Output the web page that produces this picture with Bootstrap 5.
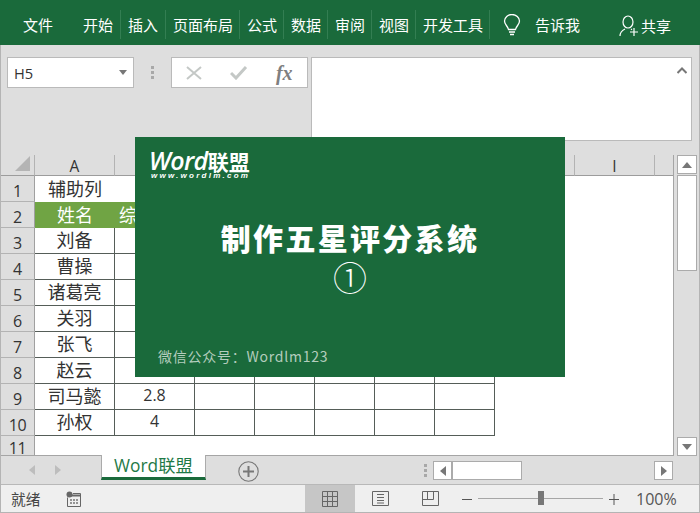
<!DOCTYPE html>
<html lang="zh-CN">
<head>
<meta charset="utf-8">
<title>Word联盟</title>
<link href="https://cdn.jsdelivr.net/npm/bootstrap@5.3.0/dist/css/bootstrap.min.css" rel="stylesheet">
<style>
html,body{height:100%;margin:0;overflow:hidden}
body{font-family:"Noto Sans CJK SC","Liberation Sans",sans-serif;background:#dedede;color:#333}
.app-shell{width:700px;height:513px;position:relative;border:solid #b4b4b4;border-width:0 1px 1px 1px;background:#dedede}
.ribbon{height:45px;background:#1a6a3b;color:#fff;font-size:15px;line-height:1;padding-left:22px;padding-top:4px;margin-right:-1px;margin-left:-1px;white-space:nowrap}
.rib-first{width:54px;padding-left:1px}
.rib-item{padding:0 0 0 7px;height:29px;display:flex;align-items:center;border-right:1px solid #337e52}
.rib-item.w2{width:44px}
.rib-item.w2a{width:45px}
.rib-item.w4{width:74px}
.rib-tell{margin-left:13px;width:32px}
.rib-tell svg{margin-top:1px}
.rib-tell-text{width:84px}
.rib-user{margin-top:3px}
.rib-share{margin-left:2px;margin-top:2px}
.fbar{height:110px;padding:12px 7px 0 6px}
.fbox{background:#fff;border:1px solid #bababa;height:31px}
.namebox{width:127px;font-size:14.67px;font-family:"Open Sans",sans-serif;padding:0 6px 0 6px;color:#333}
.grip{width:37px;padding-top:9px;gap:2px;align-items:center}
.grip i{display:block;width:3px;height:3px;background:#a8a8a8}
.fbtns{width:137px;padding:0 14px 0 14px;color:#8c8c8c}
.fx-lbl{font-family:"Liberation Serif",serif;font-style:italic;font-weight:700;font-size:20px;color:#7f7f7f}
.finput{margin-left:3px;width:382px;height:84px;background:#fff;border:1px solid #bababa;padding:9px 4px 0 0}
.mainrow{height:301px}
.sheet-wrap{width:673px;height:301px;overflow:hidden;background:#fff;border-right:1px solid #a5a5a5;border-bottom:1px solid #a5a5a5;position:relative}
table.sheet{border-collapse:separate;border-spacing:0;table-layout:fixed;width:672px}
table.sheet th,table.sheet td{padding:0;text-align:center;white-space:nowrap}
table.sheet thead th{height:21px;background:#dedede;border-right:1px solid #b3b3b3;border-bottom:1px solid #9c9c9c;font-family:"Open Sans",sans-serif;font-weight:400;font-size:15.5px;line-height:18px;color:#333;padding-top:1px}
table.sheet thead th.hd-last{border-right:0}
table.sheet thead th.hd-corner{padding:0;vertical-align:bottom;border-right:1px solid #b3b3b3}
table.sheet tbody th{height:26px;background:#dedede;font-family:"Open Sans",sans-serif;font-weight:400;font-size:16px;line-height:16px;color:#333;border-right:1px solid #a0a0a0;border-bottom:1px solid #b3b3b3;padding-top:4px;letter-spacing:-.3px}
table.sheet tbody td{height:26px;font-size:18px;line-height:21px;color:#333;padding-bottom:2px}
table.sheet tbody td.num{font-family:"Open Sans",sans-serif;font-size:16px}
table.sheet tbody tr.rw-short th,table.sheet tbody tr.rw-short td{height:20px;border-bottom:0;padding-bottom:0}
tr.rw-fill td{background:#70a444;color:#fff;border-bottom:0}
table.sheet tbody tr.rw-fill td{color:#fff}
tr.rw-grid td{border-right:1px solid #555d58;border-bottom:1px solid #555d58}
tr.rw-grid td.cell-off{border:0}
tr.rw-fill td.cell-off{background:transparent}
.vscroll{width:25px;padding:0 0 0 3px;height:301px}
.sbtn{width:20px;height:19px;background:#fff;border:1px solid #ababab;display:flex;align-items:center;justify-content:center}
.vthumb{width:20px;height:96px;background:#fff;border:1px solid #ababab;margin-top:1px}
.tabbar{height:28px;position:relative}
.tab-nav{width:100px;padding-left:28px;gap:20px;height:28px}
.sheet-tab{width:105px;height:25px;background:#fff;border:1px solid #ababab;border-top:0;border-bottom:3px solid #1a6a3b;color:#1f7a47;font-size:17.33px;line-height:20px;text-align:center;font-family:"Open Sans","Noto Sans CJK SC",sans-serif;margin-top:-1px}
.add-tab{margin-left:32px;margin-top:5px;height:21px}
.tab-grip{margin-left:158px;width:16px;gap:2px;padding-top:8px;align-items:center}
.tab-grip i{display:block;width:3px;height:3px;background:#a8a8a8}
.hsc{margin-top:5px;height:19px;width:240px}
.hsc .sbtn{width:19px}
.hthumb{width:70px;height:19px;background:#fff;border:1px solid #ababab}
.statusbar{height:28px;background:#efefef;border-top:1px solid #b8b8b8;font-size:14.67px;color:#444;margin-bottom:0}
.st-ready{width:65px;padding-left:10px}
.st-macro{width:239px}
.st-view{width:50px;height:27px;display:flex;align-items:center;justify-content:center}
.st-view.active-view{background:#c6c6c6}
.z-minus{margin-left:6px}
.zoomline{width:125px;height:1px;background:#a6a6a6;position:relative;margin:0 5px}
.zoomthumb{position:absolute;left:60px;top:-7px;width:6px;height:14px;background:#777}
.zoompct{font-family:"Open Sans",sans-serif;font-size:16px;color:#555;margin-left:16px}
.z-sign{width:12px;height:12px}
.promo{position:absolute;left:134px;top:137px;width:430px;height:240px;background:#1a6a3b;color:#fff}
.logo-main{position:absolute;left:14px;top:12px;font-size:25px;line-height:22px;font-family:"Open Sans",sans-serif;font-style:italic;font-weight:600;letter-spacing:-.6px;white-space:nowrap}
.logo-cn{font-family:"Noto Sans CJK SC",sans-serif;font-style:normal;font-size:21px;letter-spacing:0}
.logo-url{position:absolute;left:16px;top:34px;font-family:"Liberation Sans",sans-serif;font-style:italic;font-weight:700;font-size:8px;line-height:10px;letter-spacing:2.25px;white-space:nowrap}
.promo-title{position:absolute;left:0;right:0;top:82px;text-align:center;font-weight:900;font-size:30px;line-height:36px;letter-spacing:2.3px}
.promo-num{position:absolute;left:0;right:0;top:120px;text-align:center;font-family:"Noto Sans CJK SC",sans-serif;font-weight:300;font-size:34px;line-height:40px}
.promo-foot{position:absolute;left:23px;top:208px;font-size:14px;line-height:22px;letter-spacing:.75px;color:#b4cdbd;white-space:nowrap}
</style>
</head>
<body>
<div class="app-shell">
  <div class="ribbon d-flex align-items-center">
    <div class="rib-first">文件</div>
    <div class="rib-item w2a">开始</div>
    <div class="rib-item w2a">插入</div>
    <div class="rib-item w4">页面布局</div>
    <div class="rib-item w2">公式</div>
    <div class="rib-item w2">数据</div>
    <div class="rib-item w2">审阅</div>
    <div class="rib-item w2">视图</div>
    <div class="rib-item w4">开发工具</div>
    <div class="rib-tell">
      <svg class="d-block" width="18" height="22" viewBox="0 0 18 22" fill="none" stroke="#fff" stroke-width="1.3"><path d="M5.5 15.5C5 12 1.5 11 1.5 7a7.5 6.5 0 0 1 15 0c0 4-3.5 5-4 8.500z"/><path d="M6 18h6M7 20.500h4"/></svg>
    </div>
    <div class="rib-tell-text">告诉我</div>
    <svg class="d-block rib-user" width="20" height="22" viewBox="0 0 20 22" fill="none" stroke="#fff" stroke-width="1.200"><ellipse cx="9" cy="7" rx="5" ry="6"/><path d="M1 21c0-4 3-6 5-7M12 14l1 .7"/><path d="M15 13v8M11 17h8"/></svg>
    <div class="rib-share">共享</div>
  </div>

  <div class="fbar d-flex align-items-start">
    <div class="fbox namebox d-flex align-items-center justify-content-between">
      <span>H5</span>
      <svg width="8" height="5" viewBox="0 0 8 5"><path d="M0 0h8L4 5z" fill="#777"/></svg>
    </div>
    <div class="grip d-flex flex-column"><i></i><i></i><i></i></div>
    <div class="fbox fbtns d-flex align-items-center justify-content-between">
      <svg width="16" height="14" viewBox="0 0 16 14" fill="none" stroke="#c4c8c6" stroke-width="2"><path d="M1 1l14 12M15 1L1 13"/></svg>
      <svg width="18" height="14" viewBox="0 0 18 14" fill="none" stroke="#c4c8c6" stroke-width="3"><path d="M1 7l5 5 10-11"/></svg>
      <span class="fx-lbl">fx</span>
    </div>
    <div class="finput d-flex justify-content-end">
      <svg width="10" height="7" viewBox="0 0 10 7" fill="none" stroke="#777" stroke-width="2"><path d="M0.500 6L5 1.500 9.500 6"/></svg>
    </div>
  </div>

  <div class="mainrow d-flex">
    <div class="sheet-wrap">
      <table class="sheet">
        <colgroup><col style="width:34px"><col style="width:80px"><col style="width:80px"><col style="width:60px"><col style="width:60px"><col style="width:60px"><col style="width:60px"><col style="width:60px"><col style="width:80px"><col style="width:80px"><col></colgroup>
        <thead><tr>
          <th class="hd-corner"><svg class="d-block ms-auto me-1 mb-1" width="15" height="15" viewBox="0 0 15 15"><path d="M15 0v15H0z" fill="#b4b4b4"/></svg></th>
          <th>A</th><th>B</th><th>C</th><th>D</th><th>E</th><th>F</th><th>G</th><th>H</th><th>I</th><th class="hd-last"></th>
        </tr></thead>
        <tbody>
          <tr><th>1</th><td>辅助列</td><td colspan="9"></td></tr>
          <tr class="rw-fill"><th>2</th><td>姓名</td><td>综合评分</td><td></td><td></td><td></td><td></td><td></td><td class="cell-off" colspan="3"></td></tr>
          <tr class="rw-grid"><th>3</th><td>刘备</td><td></td><td></td><td></td><td></td><td></td><td></td><td class="cell-off" colspan="3"></td></tr>
          <tr class="rw-grid"><th>4</th><td>曹操</td><td></td><td></td><td></td><td></td><td></td><td></td><td class="cell-off" colspan="3"></td></tr>
          <tr class="rw-grid"><th>5</th><td>诸葛亮</td><td></td><td></td><td></td><td></td><td></td><td></td><td class="cell-off" colspan="3"></td></tr>
          <tr class="rw-grid"><th>6</th><td>关羽</td><td></td><td></td><td></td><td></td><td></td><td></td><td class="cell-off" colspan="3"></td></tr>
          <tr class="rw-grid"><th>7</th><td>张飞</td><td></td><td></td><td></td><td></td><td></td><td></td><td class="cell-off" colspan="3"></td></tr>
          <tr class="rw-grid"><th>8</th><td>赵云</td><td></td><td></td><td></td><td></td><td></td><td></td><td class="cell-off" colspan="3"></td></tr>
          <tr class="rw-grid"><th>9</th><td>司马懿</td><td class="num">2.8</td><td></td><td></td><td></td><td></td><td></td><td class="cell-off" colspan="3"></td></tr>
          <tr class="rw-grid"><th>10</th><td>孙权</td><td class="num">4</td><td></td><td></td><td></td><td></td><td></td><td class="cell-off" colspan="3"></td></tr>
          <tr class="rw-short"><th>11</th><td colspan="10"></td></tr>
        </tbody>
      </table>
    </div>
    <div class="vscroll d-flex flex-column">
      <div class="sbtn"><svg width="10" height="6" viewBox="0 0 10 6"><path d="M5 0l5 6H0z" fill="#777"/></svg></div>
      <div class="vthumb"></div>
      <div class="sbtn mt-auto"><svg width="10" height="6" viewBox="0 0 10 6"><path d="M0 0h10L5 6z" fill="#777"/></svg></div>
    </div>
  </div>

  <div class="tabbar d-flex">
    <div class="tab-nav d-flex align-items-center">
      <svg width="6" height="10" viewBox="0 0 6 10"><path d="M6 0v10L0 5z" fill="#bdbdbd"/></svg>
      <svg width="6" height="10" viewBox="0 0 6 10"><path d="M0 0v10l6-5z" fill="#bdbdbd"/></svg>
    </div>
    <div class="sheet-tab">Word联盟</div>
    <svg class="add-tab" width="21" height="21" viewBox="0 0 21 21" fill="none" stroke="#777"><circle cx="10.500" cy="10.500" r="9.700" stroke-width="1.100"/><path d="M10.500 5v11M5 10.500h11" stroke-width="2"/></svg>
    <div class="tab-grip d-flex flex-column"><i></i><i></i><i></i></div>
    <div class="hsc d-flex">
      <div class="sbtn"><svg width="6" height="10" viewBox="0 0 6 10"><path d="M6 0v10L0 5z" fill="#777"/></svg></div>
      <div class="hthumb"></div>
      <div class="sbtn ms-auto"><svg width="6" height="10" viewBox="0 0 6 10"><path d="M0 0v10l6-5z" fill="#777"/></svg></div>
    </div>
  </div>

  <div class="statusbar d-flex align-items-center">
    <div class="st-ready">就绪</div>
    <div class="st-macro">
      <svg class="d-block" width="16" height="16" viewBox="0 0 16 16" fill="none"><circle cx="3.500" cy="3.500" r="3" fill="#666"/><path d="M1.500 6.500v9h13v-13H7" stroke="#666"/><path d="M4 4.500h10.500" stroke="#666" stroke-width="2"/><path d="M4 9h2M7 9h2M10 9h2M4 12h2M7 12h2M10 12h2" stroke="#777" stroke-width="1.500"/></svg>
    </div>
    <div class="st-view active-view">
      <svg width="16" height="16" viewBox="0 0 16 16" fill="none" stroke="#666"><path d="M.5.5h15v15H.5zM5.500.5v15M10.500.5v15M.5 5.500h15M.5 10.500h15"/></svg>
    </div>
    <div class="st-view">
      <svg width="17" height="15" viewBox="0 0 17 15" fill="none" stroke="#666"><path d="M.5.5h16v14H.5zM5 3.500h7M5 6.500h7M5 9.500h7M5 12h7"/></svg>
    </div>
    <div class="st-view">
      <svg width="17" height="15" viewBox="0 0 17 15" fill="none" stroke="#666"><path d="M.5.5h16v14H.5zM.5 8.500h11v-8M5.500.5v8"/></svg>
    </div>
    <svg class="z-sign z-minus" viewBox="0 0 12 12" stroke="#555"><path d="M1 6.500h10"/></svg>
    <div class="zoomline"><div class="zoomthumb"></div></div>
    <svg class="z-sign" viewBox="0 0 12 12" stroke="#555"><path d="M1 6.500h10M6 1v11"/></svg>
    <div class="zoompct">100%</div>
  </div>

  <div class="promo">
    <div class="logo-main">Word<span class="logo-cn">联盟</span></div>
    <div class="logo-url">www.wordlm.com</div>
    <div class="promo-title">制作五星评分系统</div>
    <div class="promo-num">①</div>
    <div class="promo-foot">微信公众号：Wordlm123</div>
  </div>
</div>
<script src="https://cdn.jsdelivr.net/npm/bootstrap@5.3.0/dist/js/bootstrap.bundle.min.js"></script>
</body>
</html>
